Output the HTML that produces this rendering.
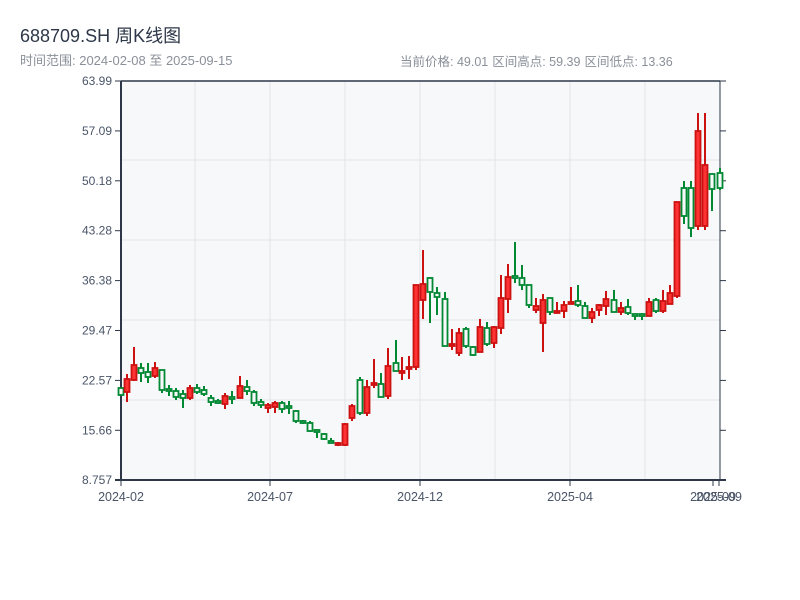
<!DOCTYPE html><html><head><meta charset="utf-8"><style>
body{margin:0;width:800px;height:600px;background:#fff;font-family:"Liberation Sans","Noto Sans CJK SC",sans-serif;overflow:hidden;position:relative}
.t{position:absolute;left:20px;top:22px;font-size:18px;color:#2d3748}
.s{position:absolute;top:50px;font-size:13px;color:#8a9099;white-space:nowrap}
.r{font-size:12.5px;top:51px}
.s span{margin-right:4px}
</style></head><body>
<div class="t">688709.SH 周K线图</div>
<div class="s" style="left:20px">时间范围: 2024-02-08 至 2025-09-15</div>
<div class="s r" style="left:400px"><span>当前价格: 49.01</span><span>区间高点: 59.39</span><span>区间低点: 13.36</span></div>
<svg width="800" height="600" style="position:absolute;left:0;top:0" id="s"></svg>
<script>
var s=document.getElementById('s'),h='';
h+='<rect x="121" y="81" width="599" height="399" fill="#f7f8fa"/>';
[195,270,345,420,495,570,645].forEach(function(x){h+='<line x1="'+x+'" y1="81" x2="'+x+'" y2="480" stroke="#e2e4e8"/>'});
[160,240,320,400].forEach(function(y){h+='<line x1="121" y1="'+y+'" x2="720" y2="'+y+'" stroke="#e2e4e8"/>'});
var lab=['63.99','57.09','50.18','43.28','36.38','29.47','22.57','15.66','8.757'];
lab.forEach(function(l,i){var y=81+i*49.9;h+='<line x1="115" y1="'+y+'" x2="121" y2="'+y+'" stroke="#2d3748"/><line x1="720" y1="'+y+'" x2="726" y2="'+y+'" stroke="#2d3748"/><text x="112" y="'+(y+4)+'" font-size="12" text-anchor="end" fill="#4a5568">'+l+'</text>'});
h+='<line x1="121" y1="81" x2="720" y2="81" stroke="#2d3748" stroke-width="1.5"/><line x1="121" y1="81" x2="121" y2="481" stroke="#2d3748" stroke-width="2"/><line x1="720" y1="81" x2="720" y2="481" stroke="#2d3748"/><line x1="115" y1="480" x2="726" y2="480" stroke="#2d3748" stroke-width="2"/>';
[[121,'2024-02'],[270,'2024-07'],[420,'2024-12'],[570,'2025-04'],[713,'2025-09'],[719,'2025-09']].forEach(function(a){h+='<line x1="'+a[0]+'" y1="480" x2="'+a[0]+'" y2="486" stroke="#2d3748"/><text x="'+a[0]+'" y="501" font-size="12.5" text-anchor="middle" fill="#4a5568">'+a[1]+'</text>'});
var c=[[121,388,395,388,395,0],[127,379,392,374,402,1],[134,365,380,347,381,1],[141,368,373,363,382,0],[148,372,377,363,383,0],[155,368,376,362,378,1],[162,370,390,370,393,0],[169,389,391,385,396,0],[176,391,397,388,400,0],[183,394,398,390,408,0],[190,388,398,385,400,1],[197,388,392,384,394,0],[204,390,394,386,396,0],[211,398,402,395,406,0],[218,401,403,399,404,0],[225,396,404,393,409,1],[232,397,399,391,404,0],[240,386,398,376,398,1],[247,387,391,380,395,0],[254,392,403,390,406,0],[261,402,405,399,408,0],[268,405,408,403,413,1],[275,403,407,401,413,1],[282,403,409,401,413,0],[289,406,408,401,414,0],[296,411,421,410,423,0],[303,421,423,420,424,0],[310,423,431,421,432,0],[317,430,432,429,438,0],[324,434,439,433,440,0],[331,441,443,438,443,0],[338,443,445,442,446,1],[345,424,445,423,446,1],[352,406,418,404,421,1],[360,380,413,377,415,0],[367,387,413,380,416,1],[374,383,385,359,388,1],[381,384,397,373,397,0],[388,366,396,348,399,1],[396,363,371,340,371,0],[402,371,373,357,380,1],[409,367,369,356,379,1],[416,285,367,285,370,1],[423,284,300,250,319,1],[430,278,292,277,323,0],[437,293,297,287,315,0],[445,299,346,292,346,0],[452,344,346,329,350,1],[459,333,353,328,356,1],[466,329,346,327,348,0],[473,347,355,346,356,0],[480,327,352,319,352,1],[487,328,344,322,346,0],[494,327,343,326,348,1],[501,298,328,275,334,1],[508,277,299,264,313,1],[515,276,278,242,283,0],[522,278,285,265,290,0],[529,285,305,285,308,0],[536,306,310,298,313,1],[543,300,323,294,352,1],[550,298,312,298,315,0],[557,311,313,302,313,1],[564,305,311,301,318,1],[571,302,304,287,304,1],[578,301,305,285,307,0],[585,306,318,302,318,0],[592,312,318,308,323,1],[599,305,310,304,316,1],[606,299,306,291,315,1],[614,300,312,290,312,0],[621,308,312,302,315,1],[628,307,313,299,315,0],[635,314,316,314,320,0],[642,314,316,313,320,0],[649,302,316,298,316,1],[656,300,311,298,313,0],[663,301,311,290,313,1],[670,293,304,285,304,1],[677,202,296,202,298,1],[684,188,216,181,224,0],[691,188,228,181,237,0],[698,131,226,113,230,1],[705,165,226,113,230,1],[712,174,189,174,211,0],[720,173,188,168,190,0]];
c.forEach(function(d){var x=d[0],col=d[5]?'#cc1111':'#008833',f=d[5]?'#ff3333':'#f7f8fa';
h+='<line x1="'+x+'" y1="'+d[3]+'" x2="'+x+'" y2="'+d[4]+'" stroke="'+col+'" stroke-width="2"/>';
h+='<rect x="'+(x-2.5)+'" y="'+d[1]+'" width="5" height="'+Math.max(d[2]-d[1],2)+'" fill="'+f+'" stroke="'+col+'" stroke-width="1.8"/>';});
s.innerHTML=h;
</script>
</body></html>
